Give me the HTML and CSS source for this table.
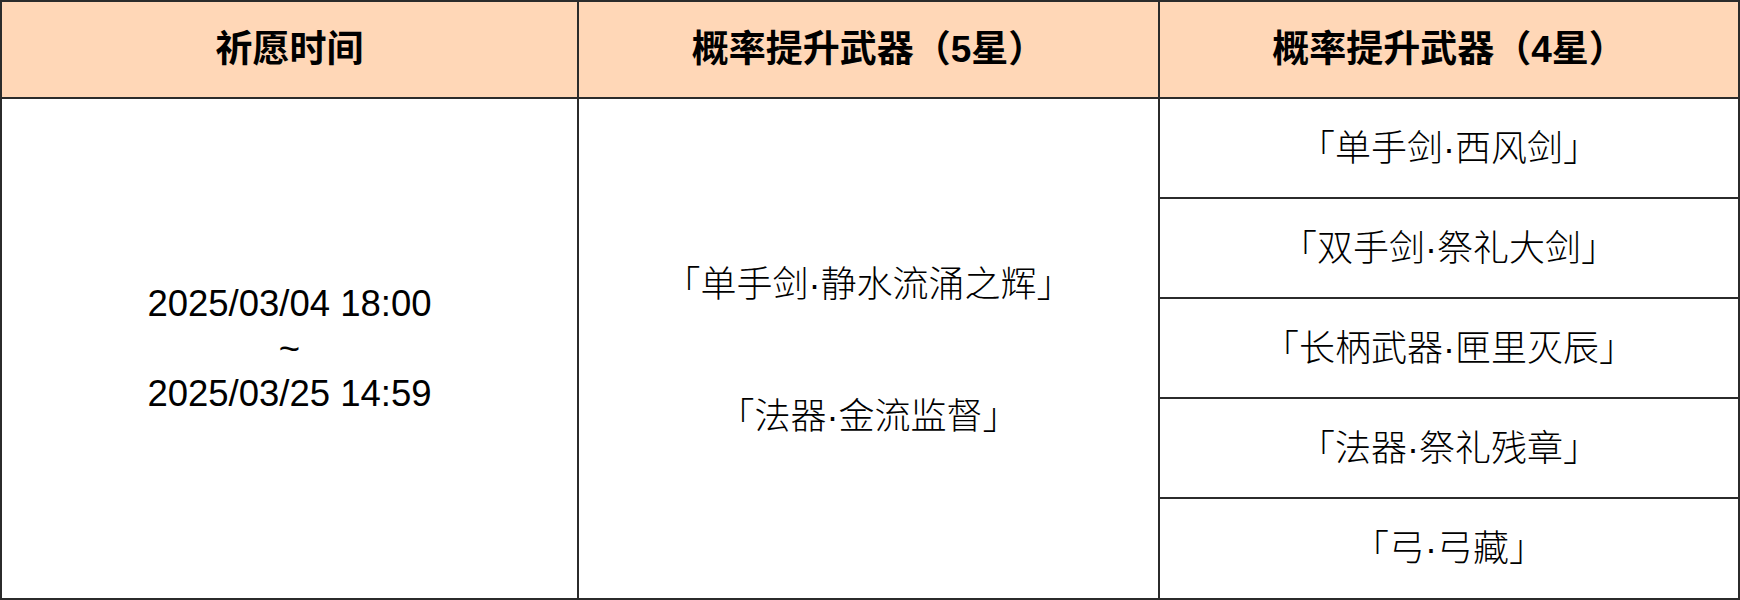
FILE: index.html
```html
<!DOCTYPE html>
<html lang="zh-CN">
<head>
<meta charset="utf-8">
<title>祈愿</title>
<link rel="stylesheet" href="styles.css">
</head>
<body>
<div class="table">
  <div class="th">祈愿时间</div>
  <div class="th">概率提升武器（5星）</div>
  <div class="th">概率提升武器（4星）</div>
  <div class="td time">2025/03/04 18:00<br>~<br>2025/03/25 14:59</div>
  <div class="td five">
    <p class="item">「单手剑·静水流涌之辉」</p>
    <p class="item">「法器·金流监督」</p>
  </div>
  <div class="list">
    <div class="td">「单手剑·西风剑」</div>
    <div class="td">「双手剑·祭礼大剑」</div>
    <div class="td">「长柄武器·匣里灭辰」</div>
    <div class="td">「法器·祭礼残章」</div>
    <div class="td">「弓·弓藏」</div>
  </div>
</div>
</body>
</html>
```

FILE: styles.css
```css
html, body {
  margin: 0;
  padding: 0;
  background: #ffffff;
}

body {
  font-family: "Liberation Sans", "Noto Sans CJK SC", sans-serif;
  color: #000000;
}

.table {
  box-sizing: border-box;
  width: 1740px;
  height: 600px;
  padding: 2px;
  background: #2b2b2b;
  display: grid;
  grid-template-columns: 575px 579px 578px;
  grid-template-rows: 95px 499px;
  gap: 2px;
}

.th {
  background: #ffd7b7;
  display: flex;
  align-items: center;
  justify-content: center;
  font-size: 37px;
  font-weight: 700;
  line-height: 45px;
}

.td {
  background: #ffffff;
  display: flex;
  align-items: center;
  justify-content: center;
  text-align: center;
  font-size: 36px;
  font-weight: 300;
  line-height: 45px;
}

.time {
  font-weight: 400;
  font-size: 36.5px;
}

.five {
  flex-direction: column;
  gap: 87px;
  padding-top: 4px;
}

.item {
  margin: 0;
}

.list {
  display: grid;
  grid-template-rows: 98px 98px 98px 98px 99px;
  gap: 2px;
  background: #2b2b2b;
}
```
